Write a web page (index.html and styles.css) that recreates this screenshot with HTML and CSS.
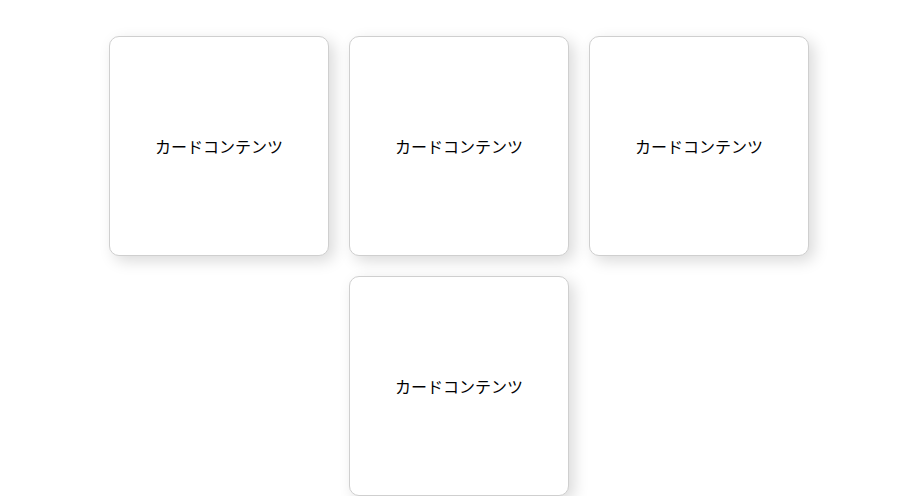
FILE: index.html
```html
<!DOCTYPE html>
<html lang="ja">
<head>
  <meta charset="UTF-8">
  <meta name="viewport" content="width=device-width, initial-scale=1.0">
  <title>カード</title>
  <link rel="stylesheet" href="styles.css">
</head>
<body>
  <div class="container">
    <div class="card">カードコンテンツ</div>
    <div class="card">カードコンテンツ</div>
    <div class="card">カードコンテンツ</div>
    <div class="card">カードコンテンツ</div>
  </div>
</body>
</html>
```

FILE: styles.css
```css
/* Basic Reset */
* {
  margin: 0;
  padding: 0;
  box-sizing: border-box;
}

body {
  font-family: "Noto Sans CJK JP", "Noto Sans", sans-serif;
  background-color: #fff;
  color: #000;
}

/* Card grid */
.container {
  display: flex;
  flex-wrap: wrap;
  justify-content: center;
  gap: 20px;
  width: 700px;
  margin: 36px auto 0;
  position: relative;
  left: 3.5px;
}

.card {
  width: 220px;
  height: 220px;
  background-color: #fff;
  border: 1px solid #cfcfcf;
  border-radius: 10px;
  box-shadow: 5px 5px 15px rgba(0, 0, 0, 0.15);
  display: flex;
  justify-content: center;
  align-items: center;
  font-size: 16px;
}
```
